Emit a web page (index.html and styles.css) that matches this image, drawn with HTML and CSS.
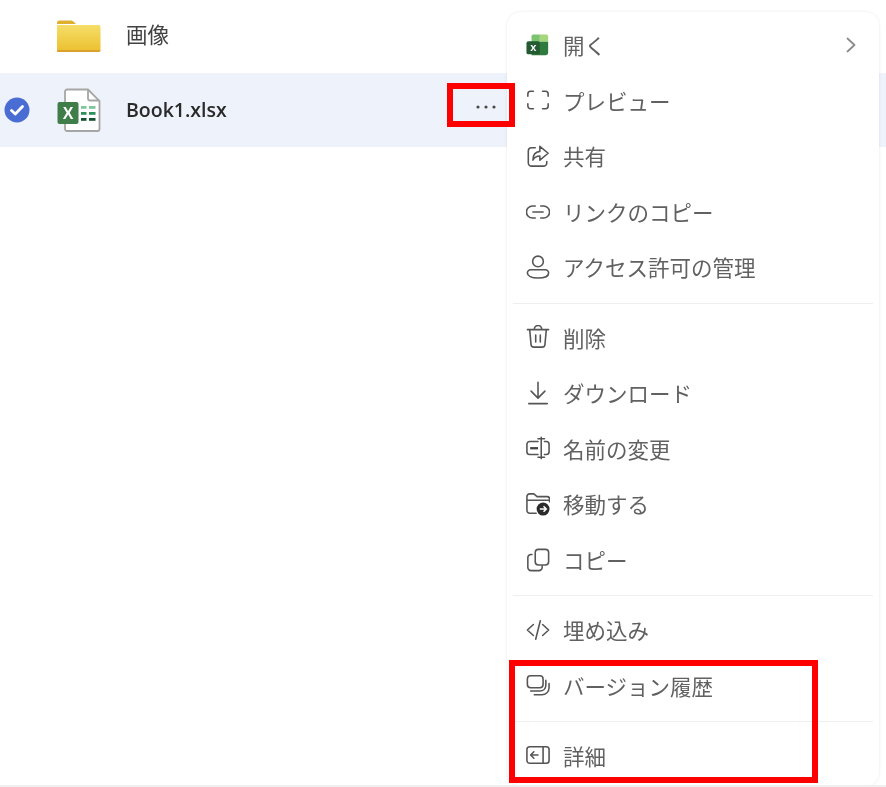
FILE: index.html
```html
<!DOCTYPE html>
<html lang="ja">
<head>
<meta charset="utf-8">
<title>Book1.xlsx</title>
<link rel="stylesheet" href="styles.css">
</head>
<body>
<div class="page">
  <div class="list">
    <div class="row row-folder">
      <span class="check-col"></span>
      <svg class="file-icon" viewBox="0 0 44 32" width="44" height="32"><path d="M0 3a2.500 2.500 0 0 1 2.500-2.500h11c1.500 0 2.500.5 3.500 1.500l2 2h-19z" fill="#dfb02f"/><path d="M0 5h41.500a2 2 0 0 1 2 2v23a2 2 0 0 1-2 2h-40a1.500 1.500 0 0 1-1.500-1.500z" fill="url(#folder)"/><path d="M0 30h43.500a2 2 0 0 1-2 2h-40a1.500 1.500 0 0 1-1.500-2z" fill="#d9a02e"/><defs><linearGradient id="folder" x1="0" y1="0" x2="0" y2="1"><stop offset="0" stop-color="#f5de68"/><stop offset="1" stop-color="#ecbf2e"/></linearGradient></defs></svg>
      <span class="name name-cjk">画像</span>
    </div>
    <div class="row row-selected">
      <span class="check-col">
        <svg viewBox="0 0 26 26" width="26" height="26"><circle cx="13" cy="13" r="12.500" fill="#4a6dd3"/><path d="M7.500 13.500l3.800 3.500 7.200-7.500" fill="none" stroke="#fff" stroke-width="2.800" stroke-linecap="round" stroke-linejoin="round"/></svg>
      </span>
      <svg class="file-icon" viewBox="0 0 44 44" width="44" height="44"><path d="M10 1.500h21l11.500 11.500v28a2 2 0 0 1-2 2h-30.500a2 2 0 0 1-2-2v-37.500a2 2 0 0 1 2-2z" fill="#fff" stroke="#a6a6a6" stroke-width="1.800"/><path d="M31 1.500v9a2 2 0 0 0 2 2h9.500" fill="none" stroke="#a6a6a6" stroke-width="1.800"/><rect x="24" y="18" width="5.500" height="2.800" fill="#7fc79a"/><rect x="32" y="18" width="6.500" height="2.800" fill="#7fc79a"/><rect x="24" y="24" width="5.500" height="2.800" fill="#2f9159"/><rect x="32" y="24" width="6.500" height="2.800" fill="#2f9159"/><rect x="24" y="30" width="5.500" height="2.800" fill="#14532f"/><rect x="32" y="30" width="6.500" height="2.800" fill="#14532f"/><rect x="0.500" y="14" width="21" height="22" rx="2" fill="#3f7d49"/><text x="11" y="31" class="xl">X</text></svg>
      <span class="name name-latin">Book1.xlsx</span>
      <span class="more">
        <svg viewBox="0 0 20 4" width="20" height="4"><circle cx="2" cy="2" r="1.600" fill="#4a4a4a"/><circle cx="10" cy="2" r="1.600" fill="#4a4a4a"/><circle cx="18" cy="2" r="1.600" fill="#4a4a4a"/></svg>
      </span>
    </div>
  </div>

  <div class="menu">
    <div class="item">
      <svg class="ico" viewBox="0 0 26 26"><path d="M8 1.500h7v8h-9v-6a2 2 0 0 1 2-2z" fill="#7cc36f"/><path d="M15 1.500h7a2 2 0 0 1 2 2v6h-9z" fill="#a4d67c"/><path d="M6 9.500h18v12a2.500 2.500 0 0 1-2.500 2.500h-15.500z" fill="#2f7a3d"/><rect x="0.500" y="9" width="14.500" height="14" rx="2" fill="#235a31"/><text x="8" y="20" class="xs">x</text></svg>
      <span class="label">開く</span>
      <svg class="chev" viewBox="0 0 10 16" width="10" height="16"><path d="M1.500 1.500l7 6.500-7 6.500" fill="none" stroke="#8a8a8a" stroke-width="1.800" stroke-linecap="round" stroke-linejoin="round"/></svg>
    </div>
    <div class="item">
      <svg class="ico" viewBox="0 0 26 26"><path class="s" d="M8 3.500h-3a3 3 0 0 0-3 3v2.500M18 3.500h3a3 3 0 0 1 3 3v2.500M8 22.500h-3a3 3 0 0 1-3-3v-2.500M18 22.500h3a3 3 0 0 0 3-3v-2.500"/></svg>
      <span class="label">プレビュー</span>
    </div>
    <div class="item">
      <svg class="ico" viewBox="0 0 26 26"><path class="s" d="M10 4h-4a3.500 3.500 0 0 0-3.500 3.500v13a3.500 3.500 0 0 0 3.500 3.500h13a3.500 3.500 0 0 0 3.500-3.500v-1.500"/><path class="s" d="M15 2.500l9 7.500-9 7.500v-4.500c-3.500 0-6 1.500-7.500 4.500 0-6 2.500-9 7.500-9.500z"/></svg>
      <span class="label">共有</span>
    </div>
    <div class="item">
      <svg class="ico" viewBox="0 0 26 26"><path class="s" d="M10 6.500h-3a6.500 6.500 0 0 0 0 13h3M16 6.500h3a6.500 6.500 0 0 1 0 13h-3M7.500 13h11"/></svg>
      <span class="label">リンクのコピー</span>
    </div>
    <div class="item">
      <svg class="ico" viewBox="0 0 26 26"><circle class="s" cx="13" cy="7" r="5.800"/><path class="s" d="M5 16h16a3.500 3.500 0 0 1 3.500 3.500c0 3-4 5.500-11.500 5.500s-11.500-2.500-11.500-5.500a3.500 3.500 0 0 1 3.500-3.500z"/></svg>
      <span class="label">アクセス許可の管理</span>
    </div>
    <div class="sep"></div>
    <div class="item">
      <svg class="ico" viewBox="0 0 26 26"><path class="s" d="M1.500 5h23M9 5v-.500a4 4 0 0 1 8 0v.500M4 5l1.500 16.500a3 3 0 0 0 3 2.500h9a3 3 0 0 0 3-2.500l1.500-16.500M10.500 11v7.500M15.500 11v7.500"/></svg>
      <span class="label">削除</span>
    </div>
    <div class="item">
      <svg class="ico" viewBox="0 0 26 26"><path class="s" d="M13 1.500v17M5.500 11l7.500 7.500 7.500-7.500M3 24.500h20"/></svg>
      <span class="label">ダウンロード</span>
    </div>
    <div class="item">
      <svg class="ico" viewBox="0 0 26 26"><path class="s" d="M13 6h-9a3 3 0 0 0-3 3v8a3 3 0 0 0 3 3h9M20 6h2a3 3 0 0 1 3 3v8a3 3 0 0 1-3 3h-2M13 3h7M13 23h7M16.500 1.500v23"/><path d="M4.500 12h8.500v2.500h-8.500z" fill="#444"/></svg>
      <span class="label">名前の変更</span>
    </div>
    <div class="item">
      <svg class="ico" viewBox="0 0 26 26"><path class="s" d="M11 23h-7a3 3 0 0 1-3-3v-15a3 3 0 0 1 3-3h4.500l3.500 3h11a2.500 2.500 0 0 1 2.500 2.500v3M1 9h24"/><circle cx="18.500" cy="18.500" r="7" fill="#2b2b2b"/><path d="M15 18.500h7M19 15.500l3 3-3 3" fill="none" stroke="#fff" stroke-width="1.600"/></svg>
      <span class="label">移動する</span>
    </div>
    <div class="item">
      <svg class="ico" viewBox="0 0 26 26"><rect class="s" x="10" y="1.500" width="14.500" height="17" rx="3.500"/><path class="s" d="M6.500 7h-1a3.500 3.500 0 0 0-3.500 3.500v10.500a3.500 3.500 0 0 0 3.500 3.500h8.500a3.500 3.500 0 0 0 3.500-3.500v-1.500"/></svg>
      <span class="label">コピー</span>
    </div>
    <div class="sep"></div>
    <div class="item">
      <svg class="ico" viewBox="0 0 26 26"><path class="s" d="M8 7l-6.500 6 6.500 6M18 7l6.500 6-6.500 6M15.500 3l-5 20"/></svg>
      <span class="label">埋め込み</span>
    </div>
    <div class="item">
      <svg class="ico" viewBox="0 0 26 26"><rect class="s" x="1.500" y="3" width="17" height="13" rx="3.500"/><path class="s" d="M5 19.500h10c3.500 0 6.500-2.500 6.500-6.500v-5M9 23.500h8c4.500 0 8-3 8-8v-4"/></svg>
      <span class="label">バージョン履歴</span>
    </div>
    <div class="sep"></div>
    <div class="item">
      <svg class="ico" viewBox="0 0 26 26"><rect class="s" x="1" y="4" width="24" height="18" rx="3"/><path class="s" d="M18.500 4v18M13 13h-8M8.500 9.500l-3.500 3.500 3.500 3.500"/></svg>
      <span class="label">詳細</span>
    </div>
  </div>

  <div class="mark mark-more"></div>
  <div class="mark mark-items"></div>
</div>
</body>
</html>
```
FILE: styles.css
```css
* { box-sizing: border-box; }
html, body { margin: 0; padding: 0; background: #fff; overflow: hidden; }
.page {
  position: relative;
  width: 886px;
  height: 787px;
  overflow: hidden;
  border-bottom: 2px solid #efefef;
  font-family: "Noto Sans CJK JP", "Noto Sans", sans-serif;
  filter: blur(0.45px);
}
.list { display: flex; flex-direction: column; }
.row { display: flex; align-items: center; }
.row-folder { height: 73px; padding-bottom: 2px; }
.row-selected { height: 74px; background: #eef2fb; padding-bottom: 1px; }
.check-col { width: 57px; padding-left: 4px; display: flex; align-items: center; flex: none; }
.file-icon { flex: none; margin-right: 25px; }
.name-cjk { font-size: 21.500px; font-weight: 400; color: #424242; margin-bottom: 5px; }
.name-latin { font-family: "Open Sans", "Noto Sans", sans-serif; font-size: 19.500px; font-weight: 600; color: #2a2a2a; flex: 1; }
.more { display: flex; align-items: center; width: 67px; padding: 0 0 5px 29px; margin-right: 372px; flex: none; }
.xl { font-family: "Liberation Sans", sans-serif; font-size: 16px; font-weight: 700; fill: #fff; text-anchor: middle; }
.xs { font-family: "Liberation Sans", sans-serif; font-size: 12px; font-weight: 700; fill: #fff; text-anchor: middle; }

.menu {
  position: absolute;
  left: 507px;
  top: 12px;
  width: 372px;
  height: 774px;
  padding: 5px 6px 6px;
  background: #fff;
  border-radius: 14px;
  box-shadow: 0 0 3px rgba(0, 0, 0, 0.10);
  display: flex;
  flex-direction: column;
}
.item {
  height: 55.600px;
  flex: none;
  display: flex;
  align-items: center;
  padding-left: 13px;
}
.ico { width: 24px; height: 24px; flex: none; margin-right: 13px; }
.s { fill: none; stroke: #555; stroke-width: 1.700; stroke-linecap: round; stroke-linejoin: round; }
.label { font-size: 21.500px; color: #616161; line-height: 1; flex: 1; }
.chev { margin-right: 17px; flex: none; }
.sep { height: 1px; background: #efefef; margin: 8px 0 5.500px; flex: none; }

.mark { position: absolute; border: 6px solid #ff0000; }
.mark-more { left: 447px; top: 83px; width: 68px; height: 44px; }
.mark-items { left: 509px; top: 660px; width: 309px; height: 123px; }
```
